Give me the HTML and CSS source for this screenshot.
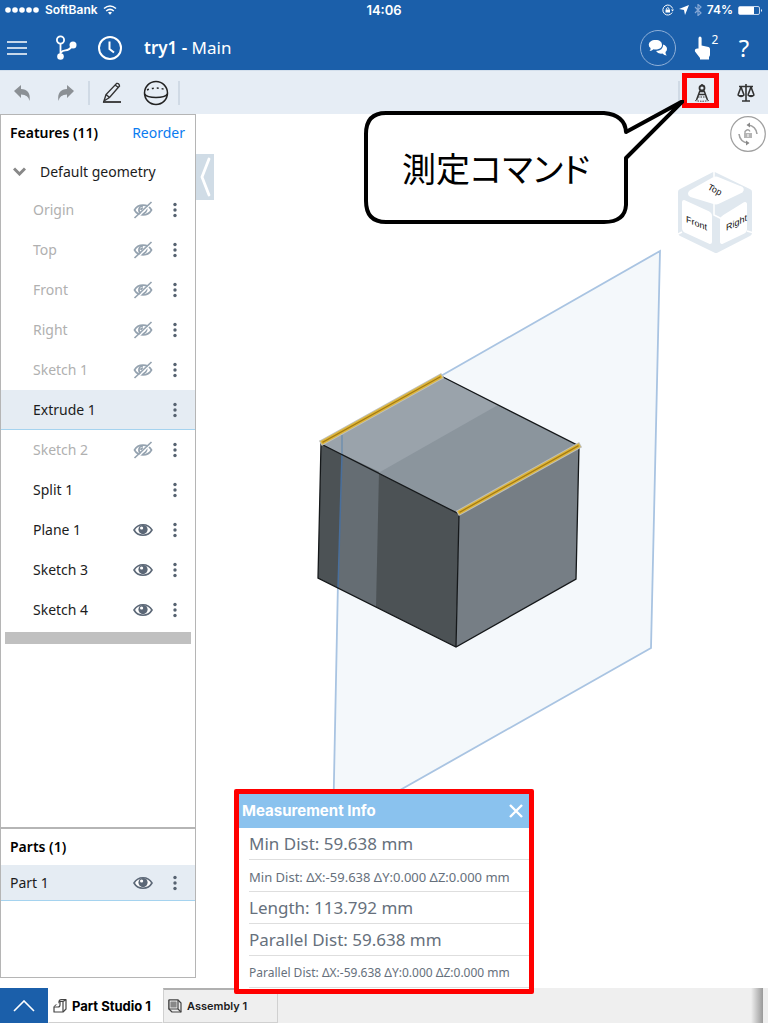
FILE: index.html
```html
<!DOCTYPE html>
<html lang="en">
<head>
    <meta charset="utf-8">
    <meta name="viewport" content="width=device-width, initial-scale=1">
    <title>try1 - Main</title>
    <link rel="stylesheet" href="styles.css">
</head>
<body>

<!-- shared icons -->
<svg class="sprite" aria-hidden="true">
    <symbol id="eye" viewBox="0 0 20 14">
        <path d="M1 7C5 0 15 0 19 7C15 14 5 14 1 7Z" fill="#fff" stroke="#5c6877" stroke-width="1.6"/>
        <circle cx="10" cy="6.6" r="4.6" fill="#5c6877"/>
        <circle cx="8.6" cy="5" r="1.6" fill="#fff"/>
    </symbol>
    <symbol id="eye-off" viewBox="0 0 20 18">
        <g fill="none" stroke="#95a3b0" stroke-width="1.7">
            <path d="M1.5 9C5 2.500 15 2.500 18.500 9C15 15.500 5 15.500 1.500 9Z"/>
            <path d="M10 5C5 5 5 11 8 12.500M13.500 7C14.500 10 12 12.500 9 12.700M10 7Q8 7 8 9"/>
            <path d="M3.500 17.500L19 2" stroke="#fff" stroke-width="1.500"/>
            <path d="M1.500 17L18.500 1" stroke-width="1.700"/>
        </g>
    </symbol>
    <symbol id="dots" viewBox="0 0 4 16">
        <g fill="#566270"><circle cx="2" cy="2.500" r="1.700"/><circle cx="2" cy="8" r="1.700"/><circle cx="2" cy="13.500" r="1.700"/></g>
    </symbol>
</svg>

<header class="header">
    <div class="status">
        <div class="status-left">
            <svg width="35" height="8" viewBox="0 0 35 8" fill="#fff"><circle cx="3" cy="4" r="2.800"/><circle cx="10" cy="4" r="2.800"/><circle cx="17" cy="4" r="2.800"/><circle cx="24" cy="4" r="2.800"/><circle cx="31" cy="4" r="2.800"/></svg>
            <span>SoftBank</span>
            <svg width="14" height="10" viewBox="0 0 14 10" fill="none" stroke="#fff" stroke-width="1.600"><path d="M1 3.500Q7 -1.500 13 3.500M3.200 6Q7 2.800 10.800 6"/><path d="M5 7.500Q7 6 9 7.500L7 9.800Z" fill="#fff" stroke="none"/></svg>
        </div>
        <span class="time">14:06</span>
        <div class="status-right">
            <svg width="12" height="12" viewBox="0 0 12 12" fill="none" stroke="#fff"><path d="M10.200 8.500A5 5 0 1 1 10.600 4.500"/><path d="M9 5.500H12L10.500 7.500Z" fill="#fff" stroke="none"/><path d="M3.500 5.500H8V8.500H3.500Z" fill="#fff" stroke="none"/><path d="M4.500 5.500V4.500Q5.800 2.600 7 4.500V5.500"/></svg>
            <svg width="10" height="10" viewBox="0 0 10 10" fill="#fff"><path d="M10 0L6 10L5 5L0 4Z"/></svg>
            <svg width="8" height="12" viewBox="0 0 8 12" fill="none" stroke="#86a8d6" stroke-width="1.200"><path d="M1 3L7 9L4 11.500V.5L7 3L1 9"/></svg>
            <span>74%</span>
            <svg width="25" height="9" viewBox="0 0 25 9"><rect x=".5" y=".5" width="21" height="8" rx="1.500" fill="none" stroke="#c7d7ed"/><path d="M1 1H16V8H1Z" fill="#fff"/><path d="M23 3Q25 4.500 23 6Z" fill="#fff"/></svg>
        </div>
    </div>

    <nav class="nav">
        <button class="nav-btn menu-btn" aria-label="Menu">
            <svg width="20" height="14" viewBox="0 0 20 14" stroke="#fff" stroke-width="1.600"><path d="M0 1H20M0 7H20M0 13H20"/></svg>
        </button>
        <button class="nav-btn" aria-label="Versions">
            <svg width="22" height="26" viewBox="0 0 22 26" fill="none" stroke="#fff" stroke-width="1.800"><circle cx="5.500" cy="5" r="3.600"/><path d="M5.500 9V21M6 17.500C9 13.500 13 18 17 11"/><circle cx="5.500" cy="21.500" r="3.300" fill="#fff" stroke="none"/><circle cx="18" cy="10" r="3.500" fill="#fff" stroke="none"/></svg>
        </button>
        <button class="nav-btn" aria-label="History">
            <svg width="26" height="26" viewBox="0 0 26 26" fill="none" stroke="#fff" stroke-width="2"><circle cx="13" cy="13" r="11"/><path d="M12.500 6.500V14L17 17.500"/></svg>
        </button>
        <h1 class="title"><b>try1 -</b> Main</h1>
        <button class="nav-btn chat" aria-label="Comments">
            <svg width="20" height="20" viewBox="0 0 20 20" fill="#fff"><path d="M7.500 2C12 2 14 4 14 7C14 10 11 11.500 7.500 11.500Q6.500 11.500 5.500 11.200Q4 13 1.500 13Q3 11.500 2.500 10Q.8 8.800 .8 7C.8 4 3.500 2 7.500 2Z"/><path d="M15.200 6.500Q19 8 19 11Q19 12.800 17.500 14Q17.300 16 18.800 17.500Q16 17.500 14.500 15.500Q10 16.200 8 13Q15 12.500 15.200 6.500Z"/></svg>
        </button>
        <button class="nav-btn touch" aria-label="Touch mode 2">
            <svg width="17" height="24" viewBox="0 0 17 24" fill="#fff"><path d="M4.500 2.200Q4.600 .6 6 .6Q7.500 .6 7.600 2.200V9.500L14.500 11Q16 11.500 16 13V18.500Q16 20 15 21V23.500H6V22L1 15.500Q.2 12 4.500 12.500Z"/></svg>
            <sup>2</sup>
        </button>
        <button class="nav-btn help" aria-label="Help">?</button>
    </nav>
</header>

<div class="toolbar">
    <button class="tool" aria-label="Undo">
        <svg width="18" height="18" viewBox="0 0 18 18" fill="#8b9095"><path d="M1 7L8 1V5C14 5 18 9 16.500 17Q15.500 10.500 8 10.500V14Z"/></svg>
    </button>
    <button class="tool" aria-label="Redo">
        <svg width="18" height="18" viewBox="0 0 18 18" fill="#8b9095"><path d="M17 7L10 1V5C4 5 0 9 1.500 17Q2.500 10.500 10 10.500V14Z"/></svg>
    </button>
    <span class="sep"></span>
    <button class="tool" aria-label="Sketch">
        <svg width="20" height="22" viewBox="0 0 20 22" fill="none" stroke="#333" stroke-width="1.400"><path d="M2 19L4 12.500L14.500 1.500Q17 .8 17.500 4L7.500 15.500ZM4 12.500L7.500 15.500M13 3L16.500 5.500"/><path d="M1 20H19" stroke-width="1.800"/></svg>
    </button>
    <button class="tool" aria-label="Shading">
        <svg width="26" height="26" viewBox="0 0 26 26" fill="none" stroke="#222" stroke-width="1.500"><circle cx="13" cy="13" r="11.500"/><path d="M1.500 14Q4 17.500 13 17.500T24.500 14"/><path d="M4 10Q13 6 23 10" stroke-dasharray="2 3"/></svg>
    </button>
    <span class="sep"></span>
    <span class="sep push"></span>
    <button class="tool measure" aria-label="Measure">
        <svg width="14" height="18" viewBox="0 0 14 18" fill="none" stroke="#333" stroke-width="1.500"><circle cx="7" cy="4" r="2.500" stroke-width="1.800"/><path d="M7 0V2M5 6.500L1.500 16M9 6.500L12.500 16M4 10.500H10M4.500 7.500H9.500"/><path d="M0 16.500Q7 18 14 16.500M3 13H11" stroke-width="1" stroke-dasharray="1.500 1"/></svg>
    </button>
    <button class="tool" aria-label="Mass properties">
        <svg width="18" height="18" viewBox="0 0 18 18" fill="none" stroke="#333" stroke-width="1.600"><path d="M9 0V17M2 2.500H16M5 17H13M4 3L1 11M4 3L7 11M14 3L11 11M14 3L17 11"/><path d="M0 11H8Q4 15.500 0 11ZM10 11H18Q14 15.500 10 11Z" fill="#333" stroke="none"/></svg>
    </button>
</div>

<main class="main">
    <aside class="sidebar">
        <section class="features">
            <div class="panel-head">
                <h2>Features (11)</h2>
                <a href="#">Reorder</a>
            </div>
            <button class="group">
                <svg width="13" height="9" viewBox="0 0 13 9" fill="none" stroke="#888" stroke-width="3"><path d="M1 1.500L6.500 7L12 1.500"/></svg>
                Default geometry
            </button>
            <ul class="list">
                <li class="off"><span>Origin</span><button aria-label="Show Origin"><svg width="20" height="18"><use href="#eye-off"/></svg></button><button aria-label="Origin options"><svg width="4" height="16"><use href="#dots"/></svg></button></li>
                <li class="off"><span>Top</span><button aria-label="Show Top"><svg width="20" height="18"><use href="#eye-off"/></svg></button><button aria-label="Top options"><svg width="4" height="16"><use href="#dots"/></svg></button></li>
                <li class="off"><span>Front</span><button aria-label="Show Front"><svg width="20" height="18"><use href="#eye-off"/></svg></button><button aria-label="Front options"><svg width="4" height="16"><use href="#dots"/></svg></button></li>
                <li class="off"><span>Right</span><button aria-label="Show Right"><svg width="20" height="18"><use href="#eye-off"/></svg></button><button aria-label="Right options"><svg width="4" height="16"><use href="#dots"/></svg></button></li>
                <li class="off"><span>Sketch 1</span><button aria-label="Show Sketch 1"><svg width="20" height="18"><use href="#eye-off"/></svg></button><button aria-label="Sketch 1 options"><svg width="4" height="16"><use href="#dots"/></svg></button></li>
                <li class="selected"><span>Extrude 1</span><button aria-label="Extrude 1 options"><svg width="4" height="16"><use href="#dots"/></svg></button></li>
                <li class="off"><span>Sketch 2</span><button aria-label="Show Sketch 2"><svg width="20" height="18"><use href="#eye-off"/></svg></button><button aria-label="Sketch 2 options"><svg width="4" height="16"><use href="#dots"/></svg></button></li>
                <li><span>Split 1</span><button aria-label="Split 1 options"><svg width="4" height="16"><use href="#dots"/></svg></button></li>
                <li><span>Plane 1</span><button aria-label="Hide Plane 1"><svg width="20" height="14"><use href="#eye"/></svg></button><button aria-label="Plane 1 options"><svg width="4" height="16"><use href="#dots"/></svg></button></li>
                <li><span>Sketch 3</span><button aria-label="Hide Sketch 3"><svg width="20" height="14"><use href="#eye"/></svg></button><button aria-label="Sketch 3 options"><svg width="4" height="16"><use href="#dots"/></svg></button></li>
                <li><span>Sketch 4</span><button aria-label="Hide Sketch 4"><svg width="20" height="14"><use href="#eye"/></svg></button><button aria-label="Sketch 4 options"><svg width="4" height="16"><use href="#dots"/></svg></button></li>
            </ul>
            <div class="rollback"></div>
        </section>
        <section class="parts">
            <div class="panel-head">
                <h2>Parts (1)</h2>
            </div>
            <ul class="list">
                <li class="selected"><span>Part 1</span><button aria-label="Hide Part 1"><svg width="20" height="14"><use href="#eye"/></svg></button><button aria-label="Part 1 options"><svg width="4" height="16"><use href="#dots"/></svg></button></li>
            </ul>
        </section>
    </aside>

    <div class="viewer">
        <svg class="scene" viewBox="196 114 572 874">
            <path d="M660 251L651 648L333 828L341 433Z" fill="#f4f8fb" stroke="#a9c4e2" stroke-width="1.800"/>
            <path d="M321 444L441 376L579 446L459 514Z" fill="#8b959d"/>
            <path d="M321 444L441 376L498 405L380 472Z" fill="#9aa3ab"/>
            <path d="M321 444L459 514L456 647L318 578Z" fill="#4c5255"/>
            <path d="M342 454L379 472L376 607L338 588Z" fill="#656d73"/>
            <path d="M459 514L579 446L576 579L456 647Z" fill="#767e85"/>
            <path d="M342 435V454" stroke="#6f8fae" stroke-width="1.500"/>
            <path d="M342 454L338 588" stroke="#496f9c" stroke-width="1.500"/>
            <path d="M441 376L579 446L576 579L456 647L318 578L321 444L459 514L456 647" fill="none" stroke="#15181a" stroke-width="1.300"/>
            <g fill="none" stroke-linecap="square">
                <path d="M323 442L440 377M460 512L578 446" stroke="#bfc0bc" stroke-width="6"/>
                <path d="M323 442L440 377M460 512L578 446" stroke="#ddb63c" stroke-width="4"/>
                <path d="M323 442L440 377M460 512L578 446" stroke="#a57b12" stroke-width="1.300"/>
            </g>
        </svg>

        <button class="collapse" aria-label="Collapse panel">
            <svg width="12" height="40" viewBox="0 0 12 40" fill="none" stroke="#fff" stroke-width="2.800" stroke-linecap="round"><path d="M10 2L3 20L10 38"/></svg>
        </button>

        <button class="rotate" aria-label="Rotation lock">
            <svg width="36" height="36" viewBox="0 0 36 36" fill="none" stroke="#a0a0a0"><circle cx="18" cy="18" r="17.300" stroke-width="1.200"/><path d="M27 18Q26 10 18 9M9 18Q10 26 18 27" stroke-width="1.600"/><path d="M16.500 9L20 6.500V11.500ZM19.500 27L16 24.500V29.500Z" fill="#888" stroke="none"/><rect x="14" y="17" width="8" height="5" fill="#b5b5b5" stroke="none"/><path d="M15 17V15.500Q18 12 20 15.500" stroke-width="1.300"/><path d="M18 18V21" stroke="#fff"/></svg>
        </button>

        <svg class="cube" width="78" height="84" viewBox="0 0 78 84">
            <path d="M38 4L5 21V62L40 79L73 62V21Z" fill="#e0e8ef" stroke="#e0e8ef" stroke-width="6" stroke-linejoin="round"/>
            <g fill="#fff" stroke="#fff" stroke-width="4" stroke-linejoin="round">
                <path d="M38 8L15 21Q13 23 15 24L38 31Q40 32 42 31L65 20Q67 18 64 17L42 8Q40 7 38 8Z"/>
                <path d="M8 31L32 42Q34 43 34 45V71L10 60Q8 59 8 57Z"/>
                <path d="M48 46L69 33V58Q69 60 67 61L46 71V50Q46 47 48 46Z"/>
            </g>
            <path d="M38 0V6M38 32V44L46 48M0 64L6 61M78 62L71 60" fill="none" stroke="#fff" stroke-width="1.500"/>
            <g font-family="Liberation Sans" font-size="9" fill="#111">
                <text transform="translate(31 18) rotate(28)">Top</text>
                <text transform="translate(10 51) skewY(22)">Front</text>
                <text transform="translate(50 60) skewY(-27)">Right</text>
            </g>
        </svg>

        <div class="callout">
            <svg width="320" height="126" viewBox="0 0 320 126"><path d="M22 13H240Q261 15 262 32L319 1L262 58V105Q261 122 240 122H22Q2 122 2 101V34Q2 13 22 13Z" fill="#fff" stroke="#000" stroke-width="4" stroke-linejoin="round"/></svg>
            <span>測定コマンド</span>
        </div>

        <section class="info">
            <div class="info-head">
                <h2>Measurement Info</h2>
                <button aria-label="Close">
                    <svg width="14" height="14" viewBox="0 0 14 14" stroke="#fff" stroke-width="2.400"><path d="M1 1L13 13M13 1L1 13"/></svg>
                </button>
            </div>
            <ul>
                <li>Min Dist: 59.638 mm</li>
                <li class="medium">Min Dist: ΔX:-59.638 ΔY:0.000 ΔZ:0.000 mm</li>
                <li>Length: 113.792 mm</li>
                <li>Parallel Dist: 59.638 mm</li>
                <li class="small">Parallel Dist: ΔX:-59.638 ΔY:0.000 ΔZ:0.000 mm</li>
            </ul>
        </section>
    </div>
</main>

<footer class="tabs">
    <button class="tabs-up" aria-label="Open tab manager">
        <svg width="22" height="12" viewBox="0 0 22 12" fill="none" stroke="#fff" stroke-width="1.600"><path d="M1 11L11 1L21 11"/></svg>
    </button>
    <button class="tab active">
        <svg width="14" height="14" viewBox="0 0 14 14" fill="#fff" stroke="#444" stroke-width="1.200" stroke-linejoin="round"><path d="M6 2.500Q6 1 8 .7H13V10L10 13H1V8L3 6H6Z"/><path d="M6 2.500H10V13M10 2.500L13 .7M1 8H5Q7 8 7 6V3"/></svg>
        Part Studio 1
    </button>
    <button class="tab">
        <svg width="14" height="14" viewBox="0 0 14 14" fill="#eee" stroke="#444" stroke-width="1.200" stroke-linejoin="round"><path d="M1 1H10L13 4V13H4L1 10Z"/><path d="M1 1H10V10H1ZM10 10L13 13"/><path d="M3 3H8V8H3Z" fill="#888" stroke="#888"/></svg>
        Assembly 1
    </button>
    <div class="tabs-rest"></div>
</footer>

</body>
</html>
```

FILE: styles.css
```css
* {
    box-sizing: border-box;
}

body {
    margin: 0;
    min-height: 100vh;
    display: flex;
    flex-direction: column;
    background: #fff;
    color: #1c1c1c;
    font-family: "Noto Sans", sans-serif;
    font-size: 14px;
    line-height: 20px;
}

h1, h2, ul {
    margin: 0;
    padding: 0;
    list-style: none;
}

button {
    padding: 0;
    border: none;
    background: none;
    color: inherit;
    font: inherit;
}

svg {
    display: block;
    flex: none;
}

.sprite {
    display: none;
}

/* header */
.header {
    background: #1b5faa;
    color: #fff;
}

.status {
    display: grid;
    grid-template-columns: 1fr auto 1fr;
    align-items: center;
    height: 20px;
    padding: 0 5px;
    font-family: Inter, sans-serif;
    font-size: 12px;
    font-weight: 600;
}

.status-left, .status-right {
    display: flex;
    align-items: center;
    gap: 5px;
}

.status-right {
    justify-content: flex-end;
}

.time {
    font-size: 13px;
}

.nav {
    display: flex;
    align-items: center;
    height: 50px;
    padding: 6px 12px 0 0;
}

.nav-btn {
    display: flex;
    align-items: center;
    justify-content: center;
    width: 44px;
    height: 44px;
}

.menu-btn {
    width: 34px;
    margin-right: 10px;
}

.title {
    flex: 1;
    margin-left: 12px;
    font-size: 17px;
    font-weight: 400;
}

.title b {
    font-weight: 600;
}

.chat {
    width: 36px;
    height: 36px;
    border: 1px solid #8fb0d8;
    border-radius: 50%;
}

.touch {
    width: 26px;
    margin: 0 13px 0 17px;
    gap: 1px;
}

.touch sup {
    align-self: flex-start;
    margin-top: 4px;
    font-size: 12px;
    line-height: 20px;
}

.help {
    width: 24px;
    font-size: 24px;
}

/* toolbar */
.toolbar {
    display: flex;
    align-items: center;
    height: 44px;
    background: #e6edf5;
    border-top: 1px solid #d3dfec;
}

.tool {
    display: flex;
    align-items: center;
    justify-content: center;
    width: 44px;
    height: 44px;
}

.sep {
    width: 2px;
    height: 24px;
    background: #d0dae5;
}

.push {
    margin-left: auto;
}

.measure {
    position: relative;
}

.measure::after {
    content: "";
    position: absolute;
    top: 2px;
    left: 2px;
    box-sizing: border-box;
    width: 37px;
    height: 35px;
    border: 5px solid #f00;
}

/* feature tree */
.main {
    flex: 1;
    display: flex;
}

.sidebar {
    width: 196px;
    margin-bottom: 10px;
    display: flex;
    flex-direction: column;
    border: 1px solid #b5b5b5;
    flex: none;
}

.features {
    flex: 1;
}

.panel-head {
    display: flex;
    align-items: center;
    justify-content: space-between;
    height: 36px;
    padding: 0 10px 0 9px;
}

.panel-head h2 {
    color: #000;
    font-size: 14px;
    font-weight: 600;
}

.panel-head a {
    color: #0a7bf0;
    text-decoration: none;
}

.group {
    display: flex;
    align-items: center;
    gap: 14px;
    height: 39px;
    padding: 2px 0 0 12px;
}

.list li {
    display: flex;
    align-items: center;
    height: 40px;
    padding-left: 32px;
}

.list span {
    flex: 1;
}

.list button {
    display: flex;
    align-items: center;
    justify-content: center;
    width: 24px;
    height: 24px;
    margin-right: 8px;
}

.list .off {
    color: #b0b0b0;
}

.list .selected {
    background: #e5ecf3;
    border-bottom: 1px solid #a5d3ef;
}

.rollback {
    height: 12px;
    margin: 2px 4px;
    background: #c0c0c0;
}

.parts {
    height: 150px;
    border-top: 2px solid #b5b5b5;
}

.parts .list li {
    height: 36px;
    padding-left: 9px;
}

/* 3d view */
.viewer {
    position: relative;
    flex: 1;
}

.scene {
    position: absolute;
    width: 100%;
    height: 100%;
}

.collapse {
    position: absolute;
    top: 40px;
    left: 0;
    display: flex;
    align-items: center;
    justify-content: center;
    width: 18px;
    height: 46px;
    background: #d0dce6;
}

.rotate {
    position: absolute;
    top: 2px;
    right: 2px;
}

.cube {
    position: absolute;
    top: 57px;
    right: 14px;
}

.callout {
    position: absolute;
    top: -14px;
    right: 84px;
    width: 320px;
    height: 126px;
}

.callout svg {
    position: absolute;
}

.callout span {
    position: relative;
    display: block;
    width: 264px;
    padding-top: 46px;
    color: #000;
    font-family: "Noto Sans CJK JP", sans-serif;
    font-size: 34px;
    font-weight: 400;
    font-feature-settings: "palt";
    line-height: 44px;
    text-align: center;
}

.info {
    position: absolute;
    bottom: -6px;
    left: 38px;
    z-index: 1;
    width: 300px;
    border: 5px solid #f00;
    border-radius: 2px;
    background: #fff;
    color: #66707c;
}

.info-head {
    display: flex;
    align-items: center;
    justify-content: space-between;
    height: 34px;
    padding: 0 6px 0 3px;
    background: #8ac2ee;
    color: #fff;
}

.info-head h2 {
    font-family: Inter, sans-serif;
    font-size: 15px;
    font-weight: 700;
}

.info ul {
    padding-bottom: 1px;
}

.info li {
    height: 32px;
    margin-left: 10px;
    border-bottom: 1px solid #dedede;
    font-size: 17px;
    line-height: 32px;
    white-space: nowrap;
}

.info .medium {
    font-size: 13px;
    line-height: 34px;
}

.info .small {
    font-size: 12px;
    line-height: 34px;
}

/* document tabs */
.tabs {
    display: flex;
    height: 35px;
    background: #efefef;
}

.tabs-up {
    display: flex;
    align-items: center;
    justify-content: center;
    width: 48px;
    background: #1b5faa;
}

.tab {
    display: flex;
    align-items: center;
    gap: 5px;
    width: 115px;
    padding-left: 4px;
    border: 1px solid #d0d0d0;
    border-top: 2px solid #b0b0b0;
    font-family: Inter, sans-serif;
    font-size: 11px;
    font-weight: 600;
}

.tab.active {
    border-color: #fff #fff #d0d0d0;
    background: #fff;
    color: #000;
    font-size: 13px;
    font-weight: 700;
    white-space: nowrap;
}

.tabs-rest {
    flex: 1;
    margin-right: 5px;
    background: linear-gradient(to left, #999, #efefef 12px);
}
```
